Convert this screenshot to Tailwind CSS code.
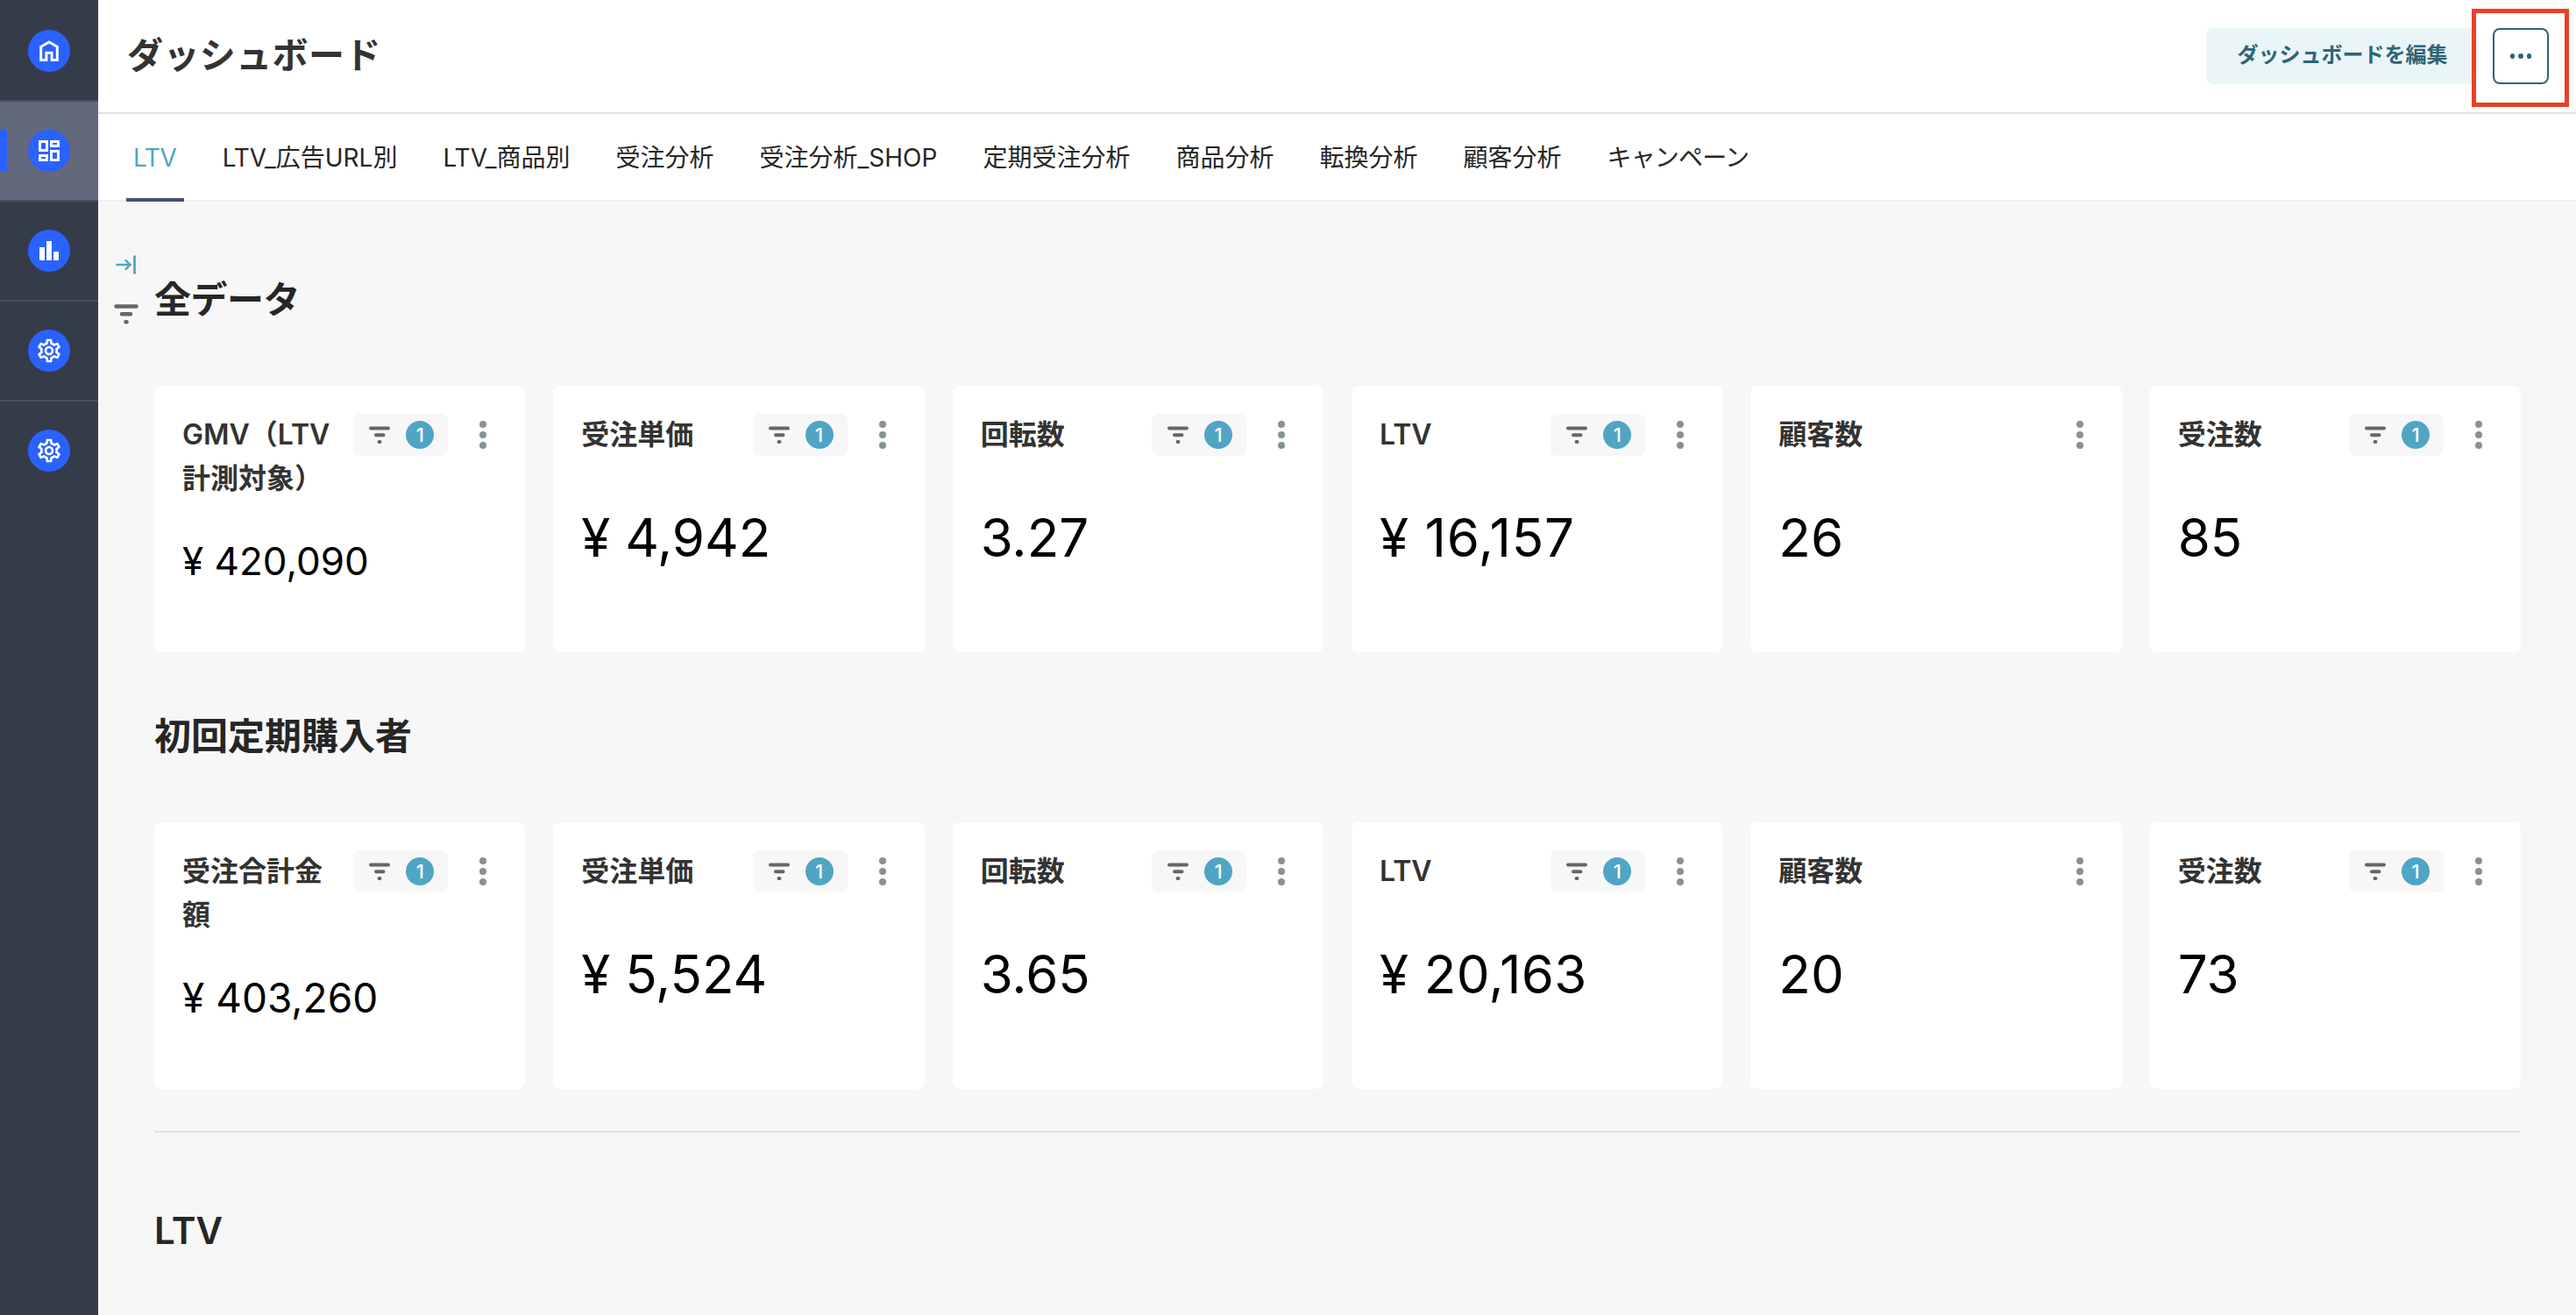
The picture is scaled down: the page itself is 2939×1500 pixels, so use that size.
<!DOCTYPE html>
<html lang="ja">
<head>
  <meta charset="UTF-8" />
  <meta name="viewport" content="width=device-width, initial-scale=1.0" />
  <title>ダッシュボード</title>
  <script src="https://cdn.jsdelivr.net/npm/@tailwindcss/browser@4"></script>
</head>
<body class="flex h-[1500px] overflow-hidden bg-[#f7f7f7] font-['Inter','Noto_Sans_CJK_JP',sans-serif] text-[#262626]">

  <!-- Sidebar -->
  <nav class="w-28 shrink-0 bg-[#363b4a] pt-0.5 text-white">
    <a class="flex h-[114px] items-center justify-center border-b-2 border-[#4a4e5f]">
      <span class="flex size-12 items-center justify-center rounded-full bg-[#2962ff]">
        <svg class="size-8" viewBox="0 0 32 32" fill="none" stroke="currentColor" stroke-width="3"><path d="M6.700 26.500V11.300L16 5.900l9.300 5.400v15.200h-6.200v-8.300h-6.200v8.300z" /></svg>
      </span>
    </a>
    <a class="relative flex h-[114px] items-center justify-center border-b-2 border-[#4a4e5f] bg-[#64687c]">
      <span class="absolute left-0 top-8 h-12 w-2 bg-[#2962ff]"></span>
      <span class="flex size-12 items-center justify-center rounded-full bg-[#2962ff]">
        <svg class="size-8" viewBox="0 0 32 32" fill="none" stroke="currentColor" stroke-width="3"><path d="M5.500 5.500h8v10h-8zM18.500 5.500h8v5h-8zM18.500 16.500h8v10h-8zM5.500 21.500h8v5h-8z" /></svg>
      </span>
    </a>
    <a class="flex h-[114px] items-center justify-center border-b-2 border-[#4a4e5f]">
      <span class="flex size-12 items-center justify-center rounded-full bg-[#2962ff]">
        <svg class="size-8" viewBox="0 0 32 32" fill="currentColor"><path d="M5 12h6v15H5zM13 5h6v22h-6zM21 17h6v10h-6z" /></svg>
      </span>
    </a>
    <a class="flex h-[114px] items-center justify-center border-b-2 border-[#4a4e5f]">
      <span class="flex size-12 items-center justify-center rounded-full bg-[#2962ff]">
        <svg class="size-8" viewBox="0 0 24 24" fill="currentColor"><path id="gear" d="M19.430 12.980c.04-.32.070-.64.070-.98s-.03-.66-.07-.98l2.110-1.650c.19-.15.240-.42.120-.64l-2-3.460c-.09-.16-.26-.25-.44-.25-.06 0-.12.010-.17.030l-2.490 1c-.52-.4-1.080-.73-1.690-.98l-.38-2.650C14.460 2.180 14.250 2 14 2h-4c-.25 0-.46.180-.49.420l-.38 2.650c-.61.250-1.170.590-1.690.980l-2.490-1c-.06-.02-.12-.03-.18-.03-.17 0-.34.090-.43.250l-2 3.460c-.13.220-.07.490.120.640l2.110 1.650c-.04.320-.07.650-.07.980s.03.660.070.980l-2.110 1.650c-.19.150-.24.420-.12.640l2 3.460c.09.160.260.250.440.250.06 0 .12-.01.170-.03l2.490-1c.52.400 1.080.730 1.690.980l.38 2.650c.03.240.240.420.490.420h4c.25 0 .46-.18.490-.42l.38-2.650c.61-.25 1.170-.59 1.690-.98l2.490 1c.06.020.120.030.180.030.17 0 .34-.09.430-.25l2-3.460c.12-.22.070-.49-.12-.64l-2.110-1.650zm-1.980-1.710c.04.310.050.520.050.730s-.02.430-.05.730l-.14 1.130.89.700 1.080.840-.7 1.210-1.270-.51-1.040-.42-.9.680c-.43.320-.84.560-1.250.730l-1.060.430-.16 1.130-.2 1.350h-1.400l-.19-1.350-.16-1.130-1.060-.43c-.43-.18-.83-.41-1.230-.71l-.91-.7-1.060.430-1.270.510-.7-1.210 1.080-.84.890-.7-.14-1.130c-.03-.31-.05-.54-.05-.74s.02-.43.050-.73l.14-1.130-.89-.7-1.080-.84.700-1.210 1.270.510 1.040.420.900-.68c.43-.32.840-.56 1.250-.73l1.060-.43.160-1.130.200-1.350h1.390l.19 1.350.160 1.130 1.060.430c.43.180.830.410 1.230.710l.91.700 1.060-.43 1.270-.51.700 1.210-1.070.850-.89.700.14 1.130zM12 8c-2.210 0-4 1.790-4 4s1.790 4 4 4 4-1.790 4-4-1.790-4-4-4zm0 6c-1.100 0-2-.9-2-2s.9-2 2-2 2 .9 2 2-.9 2-2 2z" /></svg>
      </span>
    </a>
    <a class="flex h-28 items-center justify-center">
      <span class="flex size-12 items-center justify-center rounded-full bg-[#2962ff]">
        <svg class="size-8" viewBox="0 0 24 24" fill="currentColor"><use href="#gear" /></svg>
      </span>
    </a>
  </nav>

  <div class="min-w-0 flex-1">
    <!-- Header -->
    <header class="flex h-[130px] items-center border-b-2 border-[#e0e0e0] bg-white pl-[33px] pr-[31px]">
      <h1 class="flex-1 pb-0.5 text-[41px] leading-[60px] font-bold tracking-[0.4px] text-[#333]">ダッシュボード</h1>
      <button class="mr-4 h-16 w-[311px] whitespace-nowrap rounded-lg bg-[#eaf5f8] pb-0.5 text-2xl font-bold text-[#2f6477]">ダッシュボードを編集</button>
      <div class="relative">
        <button class="flex size-16 items-center justify-center gap-1 rounded-lg border-2 border-[#2f6477] bg-white">
          <span class="size-[5.5px] rounded-full bg-[#2f6477]"></span>
          <span class="size-[5.5px] rounded-full bg-[#2f6477]"></span>
          <span class="size-[5.5px] rounded-full bg-[#2f6477]"></span>
        </button>
        <span class="absolute -left-6 -top-[22px] h-28 w-[111px] border-[5px] border-[#ea4025]"></span>
      </div>
    </header>

    <!-- Tabs -->
    <div class="flex h-[100px] gap-9 border-b-2 border-[#f0f0f0] bg-white pl-8 text-[28px] leading-[100px] whitespace-nowrap">
      <a class="relative px-2 tracking-[-0.3px] text-[#50a5c5]">LTV<span class="absolute inset-x-0 -bottom-0.5 h-1 bg-[#464f7b]"></span></a>
      <a class="px-2">LTV_広告URL別</a>
      <a class="px-2">LTV_商品別</a>
      <a class="px-2">受注分析</a>
      <a class="px-2">受注分析_SHOP</a>
      <a class="px-2">定期受注分析</a>
      <a class="px-2">商品分析</a>
      <a class="px-2">転換分析</a>
      <a class="px-2">顧客分析</a>
      <a class="px-2 tracking-[-0.8px]">キャンペーン</a>
    </div>

    <main class="flex">
      <!-- Filter panel, collapsed -->
      <aside class="w-16 shrink-0 pl-[18px] pt-[60px]">
        <svg class="ml-0.5 h-6 w-6" viewBox="0 0 24 24" fill="none" stroke="#50a5c5" stroke-width="2.400" stroke-linecap="round"><path d="M1.500 12H17M11.500 7l5 5-5 5" /><path d="M21.500 1.500v21" stroke-width="2.800" stroke-linecap="butt" /></svg>
        <svg class="mt-8 h-6 w-7" viewBox="0 0 28 24" stroke="#666" stroke-width="4.600" stroke-linecap="round"><path d="M2.500 3.500h23M9 12.300h10M13.500 21.200h1" /></svg>
      </aside>

      <div class="min-w-0 flex-1 pr-[63px]">
        <h2 class="mt-[82px] h-[60px] text-[42px] leading-[60px] font-semibold tracking-[-0.5px]">全データ</h2>
        <div id="totalCards" class="mt-[68px] grid grid-cols-6 gap-8"></div>
        <h2 class="mt-[66px] h-[60px] text-[42px] leading-[60px] font-semibold">初回定期購入者</h2>
        <div id="firstCards" class="mt-[68px] grid grid-cols-6 gap-8"></div>
        <hr class="mt-12 border-t-2 border-[#e0e0e0]" />
        <h2 class="mt-[82px] h-[60px] text-[42px] leading-[60px] font-semibold">LTV</h2>
      </div>
    </main>
  </div>

  <script>
    const totalCards = [
      { title: "GMV（LTV<br>計測対象）", value: "¥ 420,090", size: "text-[44px] mt-[21px]", filter: true },
      { title: "受注単価", value: "¥ 4,942", filter: true },
      { title: "回転数", value: "3.27", filter: true },
      { title: "LTV", value: "¥ 16,157", size: "text-[60px] mt-11 tracking-[0.8px]", filter: true },
      { title: "顧客数", value: "26", filter: false },
      { title: "受注数", value: "85", filter: true }
    ];
    const firstCards = [
      { title: "受注合計金<br>額", value: "¥ 403,260", size: "text-[46px] mt-[21px]", filter: true },
      { title: "受注単価", value: "¥ 5,524", filter: true },
      { title: "回転数", value: "3.65", filter: true },
      { title: "LTV", value: "¥ 20,163", size: "text-[60px] mt-11 tracking-[0.4px]", filter: true },
      { title: "顧客数", value: "20", filter: false },
      { title: "受注数", value: "73", filter: true }
    ];

    const filterChip = `
      <span class="flex h-12 w-[108px] shrink-0 items-center rounded-lg bg-[#f7f7f7] pl-[18px]">
        <svg class="h-5 w-6" viewBox="0 0 24 20" stroke="#666" stroke-width="4" stroke-linecap="round"><path d="M2 2.500h20M8 10.300h8.500M11.500 18h1" /></svg>
        <span class="ml-[18px] flex size-8 items-center justify-center rounded-full bg-[#50a5c5] text-[22px] font-medium text-white">1</span>
      </span>`;

    function renderCards(id, cards) {
      document.getElementById(id).innerHTML = cards.map(c => `
        <div class="h-[304px] rounded-lg bg-white p-8 pt-[31px]">
          <div class="flex items-start">
            <h3 class="flex-1 whitespace-nowrap text-[32px] leading-[50px] font-semibold text-[#333]">${c.title}</h3>
            <div class="mt-px flex h-12 items-center">
              ${c.filter ? filterChip : ""}
              <span class="ml-9 mr-3 flex flex-col gap-1">
                <i class="size-2 rounded-full bg-[#879196]"></i>
                <i class="size-2 rounded-full bg-[#879196]"></i>
                <i class="size-2 rounded-full bg-[#879196]"></i>
              </span>
            </div>
          </div>
          <div class="${c.size || "text-[60px] mt-11"} leading-[96px] whitespace-nowrap text-black">${c.value}</div>
        </div>
      `).join("");
    }

    renderCards("totalCards", totalCards);
    renderCards("firstCards", firstCards);
  </script>
</body>
</html>
